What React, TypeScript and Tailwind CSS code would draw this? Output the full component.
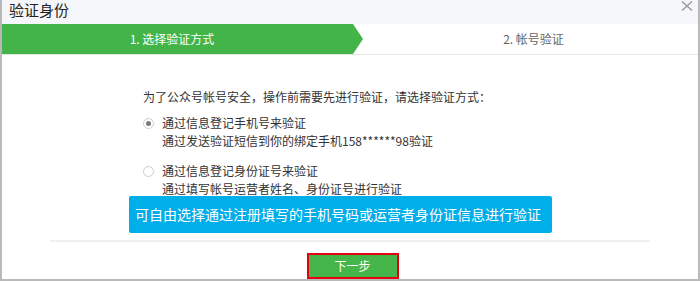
import React from "react";

const FONT = "font-['Noto_Sans_CJK_SC','Microsoft_YaHei',sans-serif]";

function Radio({ checked }: { checked?: boolean }) {
  return (
    <span className="mt-[4px] flex h-[11px] w-[11px] shrink-0 items-center justify-center rounded-full border border-[#cfcfcf] bg-white">
      {checked && <span className="h-[5px] w-[5px] rounded-full bg-[#7a7a7a]" />}
    </span>
  );
}

export default function App() {
  return (
    <div
      className={`${FONT} flex h-[281px] w-[700px] flex-col overflow-hidden border-x-2 border-b-2 border-[#b9b9b9] bg-white`}
    >
      {/* header */}
      <div className="flex h-[24px] shrink-0 items-start justify-between bg-[#f4f6f9] pl-[7px] pr-[5px]">
        <span className="mt-[1px] text-[15px] leading-[18px] text-[#222]">验证身份</span>
        <svg width="12" height="10" viewBox="0 0 12 10" className="mt-[1px]">
          <path d="M1 0.5L11 9.5M11 0.5L1 9.5" stroke="#9a9a9a" strokeWidth="1.4" />
        </svg>
      </div>

      {/* steps */}
      <div className="flex h-[31px] shrink-0 border-b border-[#e6e6e6]">
        <div className="flex h-[30px] w-[361px] items-center bg-[#43b548] [clip-path:polygon(0_0,calc(100%-10px)_0,100%_50%,calc(100%-10px)_100%,0_100%)]">
          <span className="w-[340px] text-center text-[12px] text-white">1. 选择验证方式</span>
        </div>
        <div className="flex h-[30px] flex-1 items-center justify-center pl-[6px] text-[12px] text-[#666]">
          2. 帐号验证
        </div>
      </div>

      {/* body */}
      <div className="flex flex-1 flex-col">
        <div className="pl-[141px] pt-[33px] text-[12px] text-[#333]">
          <p className="leading-[18px]">为了公众号帐号安全，操作前需要先进行验证，请选择验证方式：</p>

          <div className="mt-[8px] flex gap-[8px]">
            <Radio checked />
            <div className="leading-[18px]">
              <div>通过信息登记手机号来验证</div>
              <div>通过发送验证短信到你的绑定手机158******98验证</div>
            </div>
          </div>

          <div className="mt-[12px] flex gap-[8px]">
            <Radio />
            <div className="leading-[18px]">
              <div>通过信息登记身份证号来验证</div>
              <div>通过填写帐号运营者姓名、身份证号进行验证</div>
            </div>
          </div>
        </div>

        <div className="ml-[127px] mt-[-2px] flex h-[37px] w-[423px] items-center rounded-[2px] bg-[#00aee9] pl-[6px] text-[14px] text-white">
          可自由选择通过注册填写的手机号码或运营者身份证信息进行验证
        </div>

        <div className="mx-[48px] mt-[7px] h-[2px] bg-[#efefef]" />

        <div className="mt-[11px] flex justify-center pl-[5px]">
          <button className="flex h-[26px] w-[92px] items-center justify-center border-2 border-[#e60012] bg-[#44b549] text-[12px] text-white">
            下一步
          </button>
        </div>
      </div>
    </div>
  );
}
